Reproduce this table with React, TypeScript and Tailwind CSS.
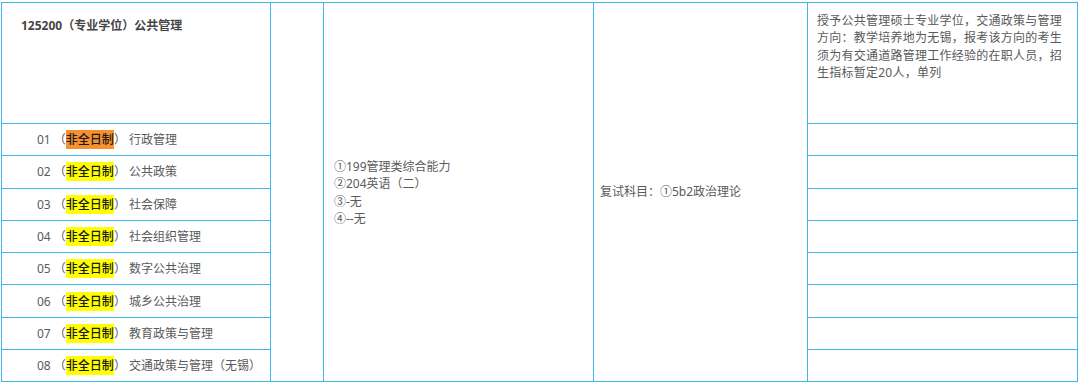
const rows = [
  { no: "01", name: "行政管理", hl: "bg-[#f5902f]" },
  { no: "02", name: "公共政策", hl: "bg-[#ffff00]" },
  { no: "03", name: "社会保障", hl: "bg-[#ffff00]" },
  { no: "04", name: "社会组织管理", hl: "bg-[#ffff00]" },
  { no: "05", name: "数字公共治理", hl: "bg-[#ffff00]" },
  { no: "06", name: "城乡公共治理", hl: "bg-[#ffff00]" },
  { no: "07", name: "教育政策与管理", hl: "bg-[#ffff00]" },
  { no: "08", name: "交通政策与管理（无锡）", hl: "bg-[#ffff00]" },
]

const cell = "border border-[#3db8e8] p-0"

export default function App() {
  return (
    <div className="w-[1080px] h-[384px] bg-white pt-[2px] pl-[1px] font-['Noto_Sans','Noto_Sans_CJK_SC',sans-serif] text-[12px] text-[#5a5a5a] overflow-hidden">
      <table className="table-fixed border-collapse w-[1076px]">
        <colgroup>
          <col className="w-[269px]" />
          <col className="w-[53px]" />
          <col className="w-[270px]" />
          <col className="w-[214px]" />
          <col className="w-[270px]" />
        </colgroup>
        <tbody>
          <tr className="h-[121px]">
            <td className={`${cell} align-top pt-[14px] pl-[19px] font-bold text-[#454545]`}>
              125200（专业学位）公共管理
            </td>
            <td className={cell} rowSpan={9}></td>
            <td className={`${cell} align-middle pl-[10px] pt-[1px] leading-[17.5px]`} rowSpan={9}>
              <div>①199管理类综合能力</div>
              <div>②204英语（二）</div>
              <div>③-无</div>
              <div>④--无</div>
            </td>
            <td className={`${cell} align-middle pl-[6px]`} rowSpan={9}>
              复试科目：①5b2政治理论
            </td>
            <td className={`${cell} align-top pt-[9px] pl-[9px] pr-[8px] leading-[17.3px] tracking-[0.25px]`}>
              授予公共管理硕士专业学位，交通政策与管理方向：教学培养地为无锡，报考该方向的考生须为有交通道路管理工作经验的在职人员，招生指标暂定20人，单列
            </td>
          </tr>
          {rows.map((r) => (
            <tr key={r.no} className="h-[32.3px]">
              <td className={`${cell} pl-[35px] pt-[1px] align-middle whitespace-nowrap`}>
                {r.no} （<span className={`${r.hl} py-[1px] text-[#1a1a1a] font-medium`}>非全日制</span>） {r.name}
              </td>
              <td className={cell}></td>
            </tr>
          ))}
        </tbody>
      </table>
    </div>
  )
}
